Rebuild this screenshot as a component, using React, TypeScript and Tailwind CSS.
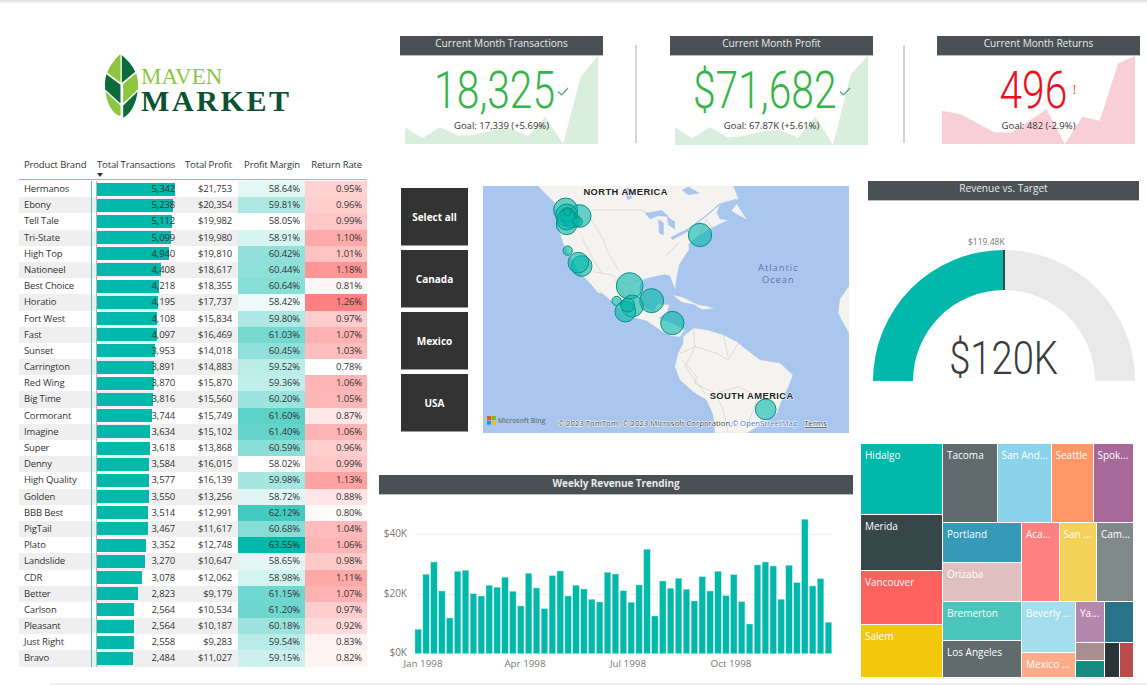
const rows: [string, number, string, number, number][] = [
  ["Hermanos", 5342, "$21,753", 58.64, 0.95],
  ["Ebony", 5238, "$20,354", 59.81, 0.96],
  ["Tell Tale", 5112, "$19,982", 58.05, 0.99],
  ["Tri-State", 5099, "$19,980", 58.91, 1.1],
  ["High Top", 4940, "$19,810", 60.42, 1.01],
  ["Nationeel", 4408, "$18,617", 60.44, 1.18],
  ["Best Choice", 4218, "$18,355", 60.64, 0.81],
  ["Horatio", 4195, "$17,737", 58.42, 1.26],
  ["Fort West", 4108, "$15,834", 59.8, 0.97],
  ["Fast", 4097, "$16,469", 61.03, 1.07],
  ["Sunset", 3953, "$14,018", 60.45, 1.03],
  ["Carrington", 3891, "$14,883", 59.52, 0.78],
  ["Red Wing", 3870, "$15,870", 59.36, 1.06],
  ["Big Time", 3816, "$15,560", 60.2, 1.05],
  ["Cormorant", 3744, "$15,749", 61.6, 0.87],
  ["Imagine", 3634, "$15,102", 61.4, 1.06],
  ["Super", 3618, "$13,868", 60.59, 0.96],
  ["Denny", 3584, "$16,015", 58.02, 0.99],
  ["High Quality", 3577, "$16,139", 59.98, 1.13],
  ["Golden", 3550, "$13,256", 58.72, 0.88],
  ["BBB Best", 3514, "$12,991", 62.12, 0.8],
  ["PigTail", 3467, "$11,617", 60.68, 1.04],
  ["Plato", 3352, "$12,748", 63.55, 1.06],
  ["Landslide", 3270, "$10,647", 58.65, 0.98],
  ["CDR", 3078, "$12,062", 58.98, 1.11],
  ["Better", 2823, "$9,179", 61.15, 1.07],
  ["Carlson", 2564, "$10,534", 61.2, 0.97],
  ["Pleasant", 2564, "$10,187", 60.18, 0.92],
  ["Just Right", 2558, "$9,283", 59.54, 0.83],
  ["Bravo", 2484, "$11,027", 59.15, 0.82],
];

// bar tops read off the chart, baseline is 548 in the same units
const weekTops = [
  475, 310, 273, 360, 441, 301, 298, 368, 375, 343, 349, 319, 361, 405, 307, 351, 413, 314, 300, 375, 343, 354, 385,
  393, 304, 309, 359, 394, 342, 235, 435, 330, 352, 322, 355, 390, 317, 360, 301, 374, 311, 392, 459, 282, 273, 285,
  385, 283, 335, 145, 345, 323, 454,
];

const bubbles: [number, number, number][] = [
  [512, 90, 36], [554, 108, 34], [515, 133, 31], [515, 105, 33], [530, 120, 24], [517, 105, 22], [515, 120, 30],
  [548, 125, 14], [517, 96, 11], [915, 165, 35], [518, 212, 14], [560, 258, 31], [550, 248, 31], [704, 318, 40],
  [770, 362, 36], [832, 429, 35], [665, 363, 14], [712, 378, 33], [691, 395, 31], [698, 375, 21], [1112, 688, 31],
];

function mix(from: number[], to: number[], t: number) {
  const c = from.map((f, i) => Math.round(f + (to[i] - f) * t));
  return `rgb(${c[0]},${c[1]},${c[2]})`;
}

const marginColor = (v: number) => mix([255, 255, 255], [1, 184, 170], (v - 58.02) / (63.55 - 58.02));
const rateColor = (v: number) => mix([255, 255, 255], [255, 128, 128], (v - 0.78) / (1.26 - 0.78));

function Header({ title, bold, className }: { title: string; bold?: boolean; className: string }) {
  return (
    <div
      className={`flex items-center justify-center pb-[3px] bg-[#4a5154] text-[#e8e8e8] border-b border-[#b9bdbe] ${bold ? "font-bold text-[10px] tracking-[-0.1px]" : "text-[10.1px]"} ${className}`}
    >
      {title}
    </div>
  );
}

function Kpi({
  title,
  value,
  goal,
  points,
  color,
  fill,
  mark,
  numberWidth,
}: {
  title: string;
  value: string;
  goal: string;
  points: string;
  color: string;
  fill: string;
  mark: "check" | "alert";
  numberWidth: string;
}) {
  return (
    <div className="w-[203px] shrink-0">
      <Header title={title} className="h-[20px]" />
      <div className="relative h-[89px] mx-[5px]">
        <svg className="absolute inset-0" width="193" height="89" viewBox="0 0 580 267">
          <polygon points={points} fill={fill} />
        </svg>
        <div className="relative flex flex-col items-center">
          <div className="flex items-start pt-[10px] h-[63px]">
            <div className={`flex justify-center whitespace-nowrap ${numberWidth}`}>
              {/* the reference face is a condensed DIN, so the digits get squeezed */}
              <span
                className="font-['Roboto',sans-serif] font-light text-[51px] leading-[50px] scale-x-[0.8]"
                style={{ color }}
              >
                {value}
              </span>
            </div>
            {mark === "check" ? (
              <svg className="mt-[21px] ml-[2px]" width="12" height="9" viewBox="0 0 12 9">
                <path d="M1 4.5 L4.5 8 L11 1" fill="none" stroke="#4fa86a" strokeWidth="1.2" />
              </svg>
            ) : (
              <span className="mt-[15px] ml-[6px] text-[13px] leading-[16px] text-[#e8503a]">!</span>
            )}
          </div>
          <div className="text-[9.5px] leading-[14px] text-[#333]">{goal}</div>
        </div>
      </div>
    </div>
  );
}

function Divider() {
  return <div className="w-[2px] h-[98px] mt-[9px] bg-[#d4d4d4] shrink-0" />;
}

function Slicer({ label }: { label: string }) {
  return (
    <div className="flex items-center justify-center pt-[1px] w-[67px] h-[58px] bg-[#333333] text-[10px] font-bold text-white border-b border-[#999]">
      {label}
    </div>
  );
}

function Tile({ label, color, className }: { label?: string; color: string; className: string }) {
  return (
    <div
      className={`shrink-0 overflow-hidden border-r border-b border-white pl-[4px] pt-[4px] text-[10px] font-medium leading-[14px] text-white whitespace-nowrap ${className}`}
      style={{ backgroundColor: color }}
    >
      {label}
    </div>
  );
}

function Logo() {
  return (
    <div className="flex pl-[105px] pt-[51px] h-[154px]">
      <svg width="33" height="64" viewBox="316 165 98 190" className="shrink-0">
        <path d="M362 165 C345 180 330 200 323 220 L362 250 Z" fill="#8cc63f" />
        <path d="M366 168 C385 185 398 200 406 218 L366 250 Z" fill="#0b6b3a" />
        <path d="M320 225 L362 256 L362 312 L316 270 C315 255 316 240 320 225 Z" fill="#0b6b3a" />
        <path d="M409 222 L370 254 L370 312 L414 270 C415 255 414 240 409 222 Z" fill="#8cc63f" />
        <path d="M317 276 L362 318 L362 350 C335 340 322 310 317 276 Z" fill="#8cc63f" />
        <path d="M413 276 L370 318 L370 354 C395 340 408 310 413 276 Z" fill="#0b6b3a" />
      </svg>
      <div className="ml-[3px] flex flex-col font-['Liberation_Serif',serif]">
        <div className="mt-[14px] h-[18px] text-[23px] leading-[18px] text-[#8cc63f]">MAVEN</div>
        <div className="mt-[3px] h-[23px] text-[30px] leading-[23px] font-bold tracking-[2.6px] text-[#0b5132]">
          MARKET
        </div>
      </div>
    </div>
  );
}

function BrandTable() {
  return (
    <div className="ml-[19px] w-[348px] text-[9.5px] text-[#333] tracking-[-0.15px]">
      <div className="flex h-[23px] pt-[1px] leading-[14px] border-b border-[#6fcfc6]">
        <div className="w-[73px] pl-[5px]">Product Brand</div>
        <div className="relative w-[88px] pl-[5px] whitespace-nowrap">
          Total Transactions
          <span className="absolute left-[5px] top-[15px] w-0 h-0 border-x-[3px] border-t-[4px] border-x-transparent border-t-[#333]" />
        </div>
        <div className="w-[58px] pr-[6px] text-right">Total Profit</div>
        <div className="w-[67px] pr-[5px] text-right whitespace-nowrap">Profit Margin</div>
        <div className="w-[62px] pr-[5px] text-right">Return Rate</div>
      </div>
      <div className="pt-[1px]">
        {rows.map(([brand, count, profit, margin, rate], i) => (
          <div key={brand} className={`flex h-[16.2px] leading-[16px] ${i % 2 ? "bg-[#efefef]" : "bg-white"}`}>
            <div className="w-[73px] pl-[5px] border-r border-[#4ec5bb] whitespace-nowrap">{brand}</div>
            <div className="relative w-[88px] pr-[5px] text-right">
              <div className="absolute left-[4px] top-0 bottom-0 w-[1px] bg-[#b5b5b5]" />
              <div
                className="absolute left-[5px] top-[1.5px] h-[13px] bg-[#01b8aa]"
                style={{ width: (78 * count) / 5342 }}
              />
              <span className="relative">{count.toLocaleString("en-US")}</span>
            </div>
            <div className="w-[58px] pr-[6px] text-right">{profit}</div>
            <div className="w-[67px] pr-[5px] text-right" style={{ backgroundColor: marginColor(margin) }}>
              {margin.toFixed(2)}%
            </div>
            <div className="w-[62px] pr-[5px] text-right" style={{ backgroundColor: rateColor(rate) }}>
              {rate.toFixed(2)}%
            </div>
          </div>
        ))}
      </div>
    </div>
  );
}

function MapVisual() {
  const halo = { paintOrder: "stroke" as const, stroke: "#ffffff", strokeWidth: 3 };
  const sea = "#a9c6ef";
  return (
    <svg width="366" height="247" viewBox="264 18 1098 741" className="ml-[15px] shrink-0" style={{ backgroundColor: sea }}>
      {/* land */}
      <g fill="#f4f3ef" stroke="#e2e1db" strokeWidth="1">
        <path d="M429 18 L449 38 L479 68 L486 128 L504 188 L519 218 L554 278 L594 318 L644 358 L664 378 L694 403 L715 412 L755 422 L795 450 L830 468 L855 470 L868 450 L830 430 L790 415 L815 400 L822 375 L790 372 L775 395 L750 385 L734 350 L734 318 L744 298 L774 290 L809 283 L825 288 L840 326 L845 288 L853 253 L882 208 L880 193 L915 163 L950 143 L997 121 L975 118 L965 98 L975 73 L1030 58 L1015 18 Z" />
        <path d="M1010 92 L1025 73 L1055 118 L1030 105 Z" />
        <path d="M576 290 L594 303 L619 340 L609 338 L589 313 Z" />
        <path d="M835 346 L862 352 L895 368 L930 382 L890 372 L860 366 Z" />
        <path d="M900 376 L935 378 L955 386 L920 388 Z" />
        <path d="M865 470 L895 445 L935 450 L985 465 L1025 485 L1055 510 L1095 540 L1155 550 L1193 585 L1180 620 L1160 660 L1145 700 L1105 730 L1055 759 L960 759 L955 705 L935 660 L895 635 L855 600 L840 560 L850 520 L865 490 Z" />
        <path d="M1362 318 L1335 358 L1330 400 L1362 460 Z" />
      </g>
      {/* terrain */}
      <g fill="none" stroke="#e6e5df" strokeWidth="5" strokeLinecap="round">
        <path d="M590 120 L620 170 L640 220 L670 270" />
        <path d="M560 170 L590 230 L620 280" />
        <path d="M660 300 L690 350" />
        <path d="M815 225 L850 190" />
        <path d="M900 500 L870 560 L930 640" />
      </g>
      {/* lakes and rivers */}
      <g fill={sea}>
        <path d="M750 100 L800 90 L822 110 L790 108 L765 118 Z" />
        <path d="M790 118 L806 128 L806 165 L792 160 Z" />
        <path d="M815 108 L840 125 L840 148 L820 135 Z" />
        <path d="M826 172 L878 146 L882 154 L832 180 Z" />
        <path d="M685 30 L700 22 L712 55 L698 60 Z" />
        <path d="M860 30 L880 20 L915 40 L880 45 Z" />
      </g>
      <path d="M875 150 L930 110 L975 72 L1025 58" fill="none" stroke={sea} strokeWidth="4" />
      {/* borders */}
      <g fill="none" stroke="#c4c3bc" strokeWidth="1.5">
        <path d="M589 90 L734 90 L760 100" />
        <path d="M594 275 L650 285 L695 315 L740 296" />
        <path d="M915 163 L935 118 L950 143" />
        <path d="M895 445 L900 500 L855 520" />
        <path d="M900 500 L965 520 L1000 540 L1030 490" />
        <path d="M860 540 L905 590 L900 610 L960 640 L985 690 L1000 759" />
        <path d="M960 640 L1030 620 L1090 650 L1060 730" />
        <path d="M985 465 L1000 530" />
      </g>
      <g fontFamily="'Liberation Sans',sans-serif" fontSize="28" fontWeight="700" letterSpacing="1.3" fill="#222" textAnchor="middle">
        <text x="692" y="44" style={halo}>
          NORTH AMERICA
        </text>
        <text x="1070" y="656" style={halo}>
          SOUTH AMERICA
        </text>
      </g>
      <g fontSize="28" letterSpacing="3" fill="#5b76ad" textAnchor="middle">
        <text x="1150" y="272">Atlantic</text>
        <text x="1150" y="308">Ocean</text>
      </g>
      <g fill="#01b8aa" fillOpacity="0.6" stroke="#0b8f85" strokeWidth="3">
        {bubbles.map(([x, y, r], i) => (
          <circle key={i} cx={x} cy={y} r={r} />
        ))}
      </g>
      {/* bing mark */}
      <rect x="276" y="708" width="12" height="12" fill="#f25022" />
      <rect x="290" y="708" width="12" height="12" fill="#7fba00" />
      <rect x="276" y="722" width="12" height="12" fill="#00a4ef" />
      <rect x="290" y="722" width="12" height="12" fill="#ffb900" />
      <text x="308" y="729" fontSize="20.5" fontWeight="600" fill="#777">
        Microsoft Bing
      </text>
      <text x="488" y="738" fontSize="23.3" fill="#444" style={halo}>
        © 2023 TomTom, © 2023 Microsoft Corporation,
      </text>
      <text x="1010" y="738" fontSize="23.3" fill="#4d74b8" style={halo}>
        © OpenStreetMap
      </text>
      <text x="1228" y="738" fontSize="23.3" fill="#444" textDecoration="underline" style={halo}>
        Terms
      </text>
    </svg>
  );
}

function WeeklyChart() {
  return (
    <svg width="474" height="186" viewBox="0 0 474 186" className="block">
      <g stroke="#efefef" strokeWidth="1">
        <line x1="36" x2="454" y1="39.5" y2="39.5" />
        <line x1="36" x2="454" y1="99.5" y2="99.5" />
      </g>
      {weekTops.map((top, i) => (
        <rect
          key={i}
          x={36 + 7.89 * i}
          y={(top / 3 - 24).toFixed(1)}
          width="6.4"
          height={((548 - top) / 3).toFixed(1)}
          fill="#01b8aa"
          stroke="#a6e6e0"
          strokeWidth="0.4"
        />
      ))}
      <g fontSize="10" fill="#777" textAnchor="end">
        <text x="28" y="42">$40K</text>
        <text x="28" y="102">$20K</text>
        <text x="28" y="161">$0K</text>
      </g>
      <g fontSize="9.8" fill="#777" textAnchor="middle">
        <text x="44" y="172">Jan 1998</text>
        <text x="146" y="172">Apr 1998</text>
        <text x="249" y="172">Jul 1998</text>
        <text x="352" y="172">Oct 1998</text>
      </g>
    </svg>
  );
}

function Gauge() {
  return (
    <div className="relative h-[243px]">
      <svg width="279" height="200" viewBox="0 0 279 200" className="absolute left-0 top-0">
        <path d="M12 180 A131 131 0 0 1 274 180 L234 180 A91 91 0 0 0 52 180 Z" fill="#e9e9e9" />
        <path d="M12 180 A131 131 0 0 1 143 49 L143 89 A91 91 0 0 0 52 180 Z" fill="#01b8aa" />
        <rect x="142" y="49" width="2" height="40" fill="#374649" />
      </svg>
      <div className="absolute left-[107px] top-[35px] text-[8.5px] leading-[12px] text-[#777]">$119.48K</div>
      <div className="absolute left-[12px] w-[262px] top-[129px] flex justify-center">
        <span className="font-['Roboto',sans-serif] font-light text-[46px] leading-[56px] scale-x-[0.83] text-[#3c3c3c]">
          $120K
        </span>
      </div>
    </div>
  );
}

function Treemap() {
  return (
    <div className="flex w-[273px] h-[235px] border-b border-[#eeeeee]">
      <div className="flex flex-col w-[82px] shrink-0">
        <Tile label="Hidalgo" color="#01b8aa" className="h-[70.5px]" />
        <Tile label="Merida" color="#374649" className="h-[56px]" />
        <Tile label="Vancouver" color="#fd625e" className="h-[54.5px]" />
        <Tile label="Salem" color="#f2c80f" className="h-[53px]" />
      </div>
      <div className="flex flex-col w-[191px] shrink-0">
        <div className="flex h-[79px]">
          <Tile label="Tacoma" color="#5f6b6d" className="w-[54.5px]" />
          <Tile label="San And..." color="#8ad4eb" className="w-[54px]" />
          <Tile label="Seattle" color="#fe9666" className="w-[42px]" />
          <Tile label="Spok..." color="#a66999" className="w-[40.5px]" />
        </div>
        <div className="flex h-[78.5px]">
          <div className="flex flex-col w-[79px]">
            <Tile label="Portland" color="#3599b8" className="h-[40px]" />
            <Tile label="Orizaba" color="#dfbfbf" className="h-[38.5px]" />
          </div>
          <Tile label="Aca..." color="#fe8080" className="w-[37.5px]" />
          <Tile label="San ..." color="#f4d25a" className="w-[37.5px]" />
          <Tile label="Cam..." color="#7f898a" className="w-[37px]" />
        </div>
        <div className="flex h-[76.5px]">
          <div className="flex flex-col w-[79px]">
            <Tile label="Bremerton" color="#4ac5bb" className="h-[39px]" />
            <Tile label="Los Angeles" color="#5f6b6d" className="h-[37.5px]" />
          </div>
          <div className="flex flex-col w-[54px]">
            <Tile label="Beverly ..." color="#a4ddee" className="h-[51.5px]" />
            <Tile label="Mexico ..." color="#fdab89" className="h-[25px]" />
          </div>
          <div className="flex flex-col w-[58px]">
            <div className="flex h-[41.5px]">
              <Tile label="Ya..." color="#b687ac" className="w-[29px]" />
              <Tile color="#28738a" className="w-[29px]" />
            </div>
            <div className="flex h-[35px]">
              <div className="flex flex-col w-[29px]">
                <Tile color="#a78f8f" className="h-[17.5px]" />
                <Tile color="#168980" className="h-[17.5px]" />
              </div>
              <Tile color="#293537" className="w-[14.5px]" />
              <Tile color="#bb4a4a" className="w-[14.5px]" />
            </div>
          </div>
        </div>
      </div>
    </div>
  );
}

export default function App() {
  return (
    <div className="relative w-[1147px] h-[685px] overflow-hidden bg-white font-['Open_Sans',sans-serif]">
      <div className="h-[3px] bg-gradient-to-b from-[#e0e0e0] to-[#f6f6f6]" />
      <div className="flex">
        <div className="w-[379px] shrink-0">
          <Logo />
          <BrandTable />
        </div>
        <div className="flex-1">
          <div className="flex pt-[33px] pl-[21px] h-[142px]">
            <Kpi
              title="Current Month Transactions"
              value="18,325"
              numberWidth="w-[120px]"
              goal="Goal: 17,339 (+5.69%)"
              color="#37b34a"
              fill="#d9eedc"
              mark="check"
              points="0,264 0,214 52,247 105,214 160,239 205,237 265,222 315,217 370,240 422,182 475,264 528,62 580,0 580,264"
            />
            <div className="w-[32px]" />
            <Divider />
            <div className="w-[33px]" />
            <Kpi
              title="Current Month Profit"
              value="$71,682"
              numberWidth="w-[144px]"
              goal="Goal: 67.87K (+5.61%)"
              color="#37b34a"
              fill="#d9eedc"
              mark="check"
              points="0,267 0,214 52,247 105,214 160,245 205,240 265,226 315,222 370,245 422,182 475,267 528,55 580,0 580,267"
            />
            <div className="w-[30px]" />
            <Divider />
            <div className="w-[32px]" />
            <Kpi
              title="Current Month Returns"
              value="496"
              numberWidth="w-[66px]"
              goal="Goal: 482 (-2.9%)"
              color="#e81123"
              fill="#f8cfd4"
              mark="alert"
              points="0,264 0,164 54,174 159,230 209,230 314,160 369,264 422,182 474,194 529,22 580,0 580,264"
            />
          </div>
          <div className="flex">
            <div className="w-[474px] shrink-0">
              <div className="flex mt-[41px]">
                <div className="flex flex-col gap-[4px] ml-[22px] pt-[2px]">
                  <Slicer label="Select all" />
                  <Slicer label="Canada" />
                  <Slicer label="Mexico" />
                  <Slicer label="USA" />
                </div>
                <MapVisual />
              </div>
              <Header title="Weekly Revenue Trending" bold className="mt-[42px] h-[20px]" />
              <WeeklyChart />
            </div>
            <div className="ml-[8px] w-[279px] shrink-0 pt-[36px]">
              <Header title="Revenue vs. Target" className="ml-[7px] w-[271px] h-[20px]" />
              <Gauge />
              <Treemap />
            </div>
          </div>
        </div>
      </div>
      <div className="absolute left-[50px] right-0 bottom-0 h-[2px] bg-[#f0f0f0]" />
    </div>
  );
}
